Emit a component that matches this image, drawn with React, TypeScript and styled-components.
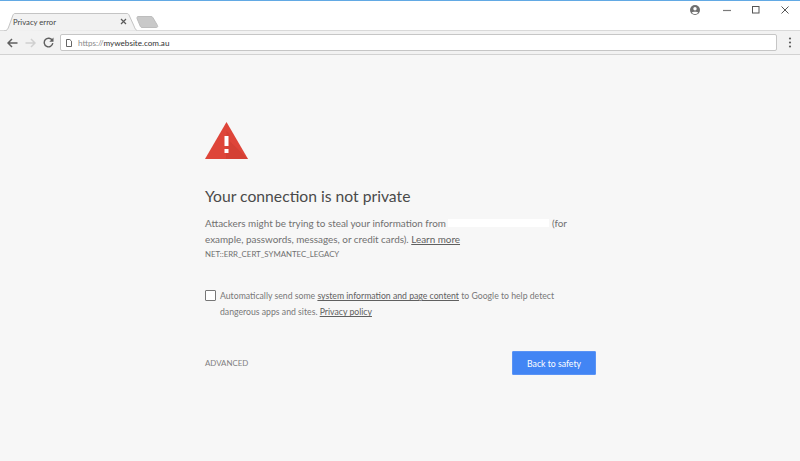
import React from "react";
import styled, { createGlobalStyle } from "styled-components";

const GlobalStyle = createGlobalStyle`
  html, body {
    margin: 0;
    padding: 0;
    background: #f7f7f7;
  }
  body {
    font-family: "Lato", "Open Sans", "Liberation Sans", sans-serif;
  }
`;

const Window = styled.div`
  width: 800px;
  height: 461px;
  display: flex;
  flex-direction: column;
  overflow: hidden;
  background: #f7f7f7;
`;

const TitleBar = styled.div`
  height: 30px;
  flex: none;
  box-sizing: border-box;
  border-top: 1px solid #62a9e4;
  background: #fff;
  display: flex;
  align-items: flex-end;
  padding-left: 4px;
`;

const Tab = styled.div`
  position: relative;
  width: 133px;
  height: 18px;
  margin-bottom: -1px;
  box-sizing: border-box;
  display: flex;
  align-items: center;
  padding: 0 10px 1px 9px;
  font-size: 7.7px;
  color: #444;
  z-index: 1;
`;

const TabShape = styled.svg`
  position: absolute;
  left: 0;
  top: 0;
  z-index: -1;
`;

const TabTitle = styled.span`
  flex: 1;
`;

const NewTab = styled.svg`
  margin: 0 0 2px -1px;
`;

const WindowControls = styled.div`
  margin-left: auto;
  align-self: flex-start;
  display: flex;
  align-items: center;
  height: 18px;
  padding-right: 11px;
  gap: 21px;
`;

const ControlIcon = styled.svg`
  display: block;
  flex: none;
`;

const AccountIcon = styled(ControlIcon)`
  margin-right: 2px;
`;

const Toolbar = styled.div`
  height: 25px;
  flex: none;
  box-sizing: border-box;
  background: #f2f2f2;
  border-top: 1px solid #d9d9d9;
  border-bottom: 1px solid #d2d2d2;
  display: flex;
  align-items: center;
  padding: 0 8px 0 7px;
`;

const NavIcons = styled.div`
  display: flex;
  align-items: center;
  gap: 7px;
  margin-right: 6px;
`;

const Omnibox = styled.div`
  flex: 1;
  height: 17px;
  box-sizing: border-box;
  background: #fff;
  border: 1px solid #c6c6c6;
  border-radius: 2px;
  display: flex;
  align-items: center;
  padding-left: 5px;
  font-size: 8.1px;
  margin-right: 11px;
`;

const Scheme = styled.span`
  color: #8a8a8a;
  margin-left: 6px;
`;

const Host = styled.span`
  color: #333;
`;

const Main = styled.main`
  flex: 1;
  box-sizing: border-box;
  padding: 67px 0 0 205px;
  width: 596px;
  color: #646464;
`;

const WarningIcon = styled.svg`
  display: block;
`;

const Heading = styled.h1`
  margin: 26px 0 0;
  font-size: 15.7px;
  line-height: 22px;
  font-weight: 400;
  color: #4a4a4a;
`;

const Paragraph = styled.p`
  margin: 8px 0 0;
  font-size: 9.9px;
  line-height: 16px;
  color: #707070;
`;

const Redacted = styled.span`
  display: inline-block;
  width: 101px;
  height: 8px;
  margin: 0 3px 0 2px;
  background: #fff;
`;

const TextLink = styled.a`
  color: #606060;
  text-decoration: underline;
`;

const ErrorCode = styled.div`
  margin-top: 1px;
  font-size: 7.85px;
  line-height: 12px;
  color: #707070;
`;

const Consent = styled.label`
  display: flex;
  align-items: flex-start;
  margin-top: 28px;
`;

const CheckBox = styled.span`
  flex: none;
  box-sizing: border-box;
  width: 11px;
  height: 11px;
  margin: 2px 4px 0 0;
  background: #fff;
  border: 1px solid #777;
  border-radius: 1px;
`;

const ConsentText = styled.span`
  max-width: 345px;
  font-size: 8.7px;
  line-height: 16px;
  color: #787878;
`;

const Actions = styled.div`
  display: flex;
  align-items: center;
  justify-content: space-between;
  margin-top: 31px;
`;

const Advanced = styled.span`
  font-size: 7.9px;
  color: #808080;
`;

const SafetyButton = styled.button`
  width: 84px;
  height: 24px;
  border: 1px solid #5a93f5;
  border-radius: 1px;
  background: #4285f4;
  color: #fff;
  font-family: inherit;
  font-size: 8.7px;
  padding: 0;
`;

export default function App() {
  return (
    <>
      <GlobalStyle />
      <Window>
        <TitleBar>
          <Tab>
            <TabShape width="133" height="18" viewBox="0 0 133 18">
              <path d="M0 18 C3 18 4 16 5 13 L9 2 C9.6 1 10 .5 11 .5 H123 C124 .5 124.5 1 125 2 L130 13 C131 16 132 17 133 17.5" fill="#f2f2f2" stroke="#c4c4c4" />
            </TabShape>
            <TabTitle>Privacy error</TabTitle>
            <svg width="7" height="7" viewBox="0 0 7 7">
              <path d="M1 1l5 5M6 1L1 6" stroke="#5a5a5a" strokeWidth="1.2" fill="none" />
            </svg>
          </Tab>
          <NewTab width="23" height="12" viewBox="0 0 23 12">
            <path d="M1 1.5 C1 1 1.4 .5 2 .5 H15 C16 .5 16.5 1 17 1.8 L21.5 9.5 C22 10.5 21.5 11.5 20.5 11.5 H6 C5.2 11.5 4.8 11.1 4.4 10.5 L1 2.5Z" fill="#c9c9c9" stroke="#bdbdbd" />
          </NewTab>
          <WindowControls>
            <AccountIcon width="10" height="10" viewBox="0 0 10 10">
              <circle cx="5" cy="5" r="5" fill="#6f6f6f" />
              <circle cx="5" cy="3.7" r="1.7" fill="#fff" />
              <path d="M1.8 7.6C2.6 6.3 7.4 6.3 8.2 7.6 7.4 8.6 6.2 9.1 5 9.1S2.6 8.6 1.8 7.6Z" fill="#fff" />
            </AccountIcon>
            <ControlIcon width="8" height="8" viewBox="0 0 8 8">
              <path d="M0 4.5h8" stroke="#7a7a7a" strokeWidth="1.2" fill="none" />
            </ControlIcon>
            <ControlIcon width="8" height="8" viewBox="0 0 8 8">
              <rect x=".5" y=".5" width="6.5" height="6.5" stroke="#555" fill="none" />
            </ControlIcon>
            <ControlIcon width="8" height="8" viewBox="0 0 8 8">
              <path d="M.5.5l7 7M7.5.5l-7 7" stroke="#555" strokeWidth="1" fill="none" />
            </ControlIcon>
          </WindowControls>
        </TitleBar>
        <Toolbar>
          <NavIcons>
            <svg width="11" height="10" viewBox="0 0 11 10">
              <path d="M10.5 5H1.5M5 1L1 5l4 4" stroke="#5f5f5f" strokeWidth="1.5" fill="none" />
            </svg>
            <svg width="11" height="10" viewBox="0 0 11 10">
              <path d="M.5 5h9M6 1l4 4-4 4" stroke="#d0d0d0" strokeWidth="1.5" fill="none" />
            </svg>
            <svg width="11" height="11" viewBox="0 0 11 11">
              <path d="M9.3 3.4A4.3 4.3 0 1 0 9.8 6.2" stroke="#5f5f5f" strokeWidth="1.4" fill="none" />
              <path d="M10.5 .5v4.2H6.3z" fill="#5f5f5f" />
            </svg>
          </NavIcons>
          <Omnibox>
            <svg width="6" height="8" viewBox="0 0 6 8">
              <path d="M.5.5h3.3L5.5 2.2v5.3h-5z" fill="#fff" stroke="#555" strokeWidth=".9" />
            </svg>
            <Scheme>https://</Scheme>
            <Host>mywebsite.com.au</Host>
          </Omnibox>
          <svg width="4" height="11" viewBox="0 0 4 11">
            <circle cx="2" cy="1.5" r="1.1" fill="#5f5f5f" />
            <circle cx="2" cy="5.5" r="1.1" fill="#5f5f5f" />
            <circle cx="2" cy="9.5" r="1.1" fill="#5f5f5f" />
          </svg>
        </Toolbar>
        <Main>
          <WarningIcon width="43" height="37" viewBox="0 0 43 37">
            <path d="M21.5 0L43 37H0z" fill="#de4539" />
            <path d="M21.5 9l3 3v7l18.5 18H21z" fill="#c8392e" opacity=".45" />
            <rect x="19.5" y="14" width="4" height="10" fill="#fff" />
            <rect x="19.5" y="27" width="4" height="4" fill="#fff" />
          </WarningIcon>
          <Heading>Your connection is not private</Heading>
          <Paragraph>
            Attackers might be trying to steal your information from
            <Redacted />
            (for example, passwords, messages, or credit cards).{" "}
            <TextLink>Learn more</TextLink>
          </Paragraph>
          <ErrorCode>NET::ERR_CERT_SYMANTEC_LEGACY</ErrorCode>
          <Consent>
            <CheckBox />
            <ConsentText>
              Automatically send some <TextLink>system information and page content</TextLink> to Google to help detect
              dangerous apps and sites. <TextLink>Privacy policy</TextLink>
            </ConsentText>
          </Consent>
          <Actions>
            <Advanced>ADVANCED</Advanced>
            <SafetyButton>Back to safety</SafetyButton>
          </Actions>
        </Main>
      </Window>
    </>
  );
}
